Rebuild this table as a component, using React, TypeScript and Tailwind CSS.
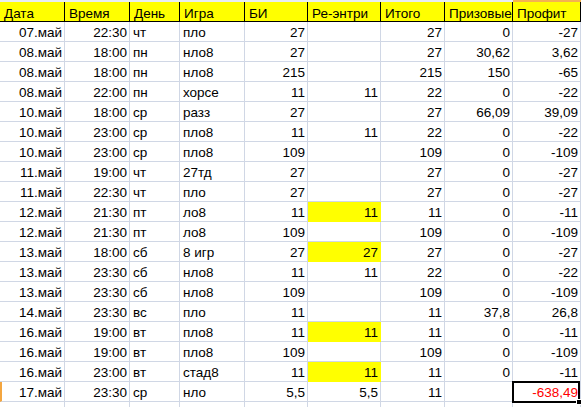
import React from "react";

const W = [
  "w-[65px]",
  "w-[65px]",
  "w-[50px]",
  "w-[65px]",
  "w-[63px]",
  "w-[73px]",
  "w-[64px]",
  "w-[68px]",
  "w-[68px]",
];

const headers = ["Дата", "Время", "День", "Игра", "БИ", "Ре-энтри", "Итого", "Призовые", "Профит"];

// align: r = right, l = left
const align = ["r", "r", "l", "l", "r", "r", "r", "r", "r"];

type Row = { v: string[]; y?: boolean };

const rows: Row[] = [
  { v: ["07.май", "22:30", "чт", "пло", "27", "", "27", "0", "-27"] },
  { v: ["08.май", "18:00", "пн", "нло8", "27", "", "27", "30,62", "3,62"] },
  { v: ["08.май", "18:00", "пн", "нло8", "215", "", "215", "150", "-65"] },
  { v: ["08.май", "22:00", "пн", "хорсе", "11", "11", "22", "0", "-22"] },
  { v: ["10.май", "18:00", "ср", "разз", "27", "", "27", "66,09", "39,09"] },
  { v: ["10.май", "23:00", "ср", "пло8", "11", "11", "22", "0", "-22"] },
  { v: ["10.май", "23:00", "ср", "пло8", "109", "", "109", "0", "-109"] },
  { v: ["11.май", "19:00", "чт", "27тд", "27", "", "27", "0", "-27"] },
  { v: ["11.май", "22:30", "чт", "пло", "27", "", "27", "0", "-27"] },
  { v: ["12.май", "21:30", "пт", "ло8", "11", "11", "11", "0", "-11"], y: true },
  { v: ["12.май", "21:30", "пт", "ло8", "109", "", "109", "0", "-109"] },
  { v: ["13.май", "18:00", "сб", "8 игр", "27", "27", "27", "0", "-27"], y: true },
  { v: ["13.май", "23:30", "сб", "нло8", "11", "11", "22", "0", "-22"] },
  { v: ["13.май", "23:30", "сб", "нло8", "109", "", "109", "0", "-109"] },
  { v: ["14.май", "23:30", "вс", "пло", "11", "", "11", "37,8", "26,8"] },
  { v: ["16.май", "19:00", "вт", "пло8", "11", "11", "11", "0", "-11"], y: true },
  { v: ["16.май", "19:00", "вт", "пло8", "109", "", "109", "0", "-109"] },
  { v: ["16.май", "23:00", "вт", "стад8", "11", "11", "11", "0", "-11"], y: true },
  { v: ["17.май", "23:30", "ср", "нло", "5,5", "5,5", "11", "", "-638,49"] },
];

export default function App() {
  return (
    <div
      className="relative w-[582px] h-[407px] overflow-hidden bg-white text-black text-[13.5px]"
      style={{ fontFamily: '"Liberation Sans", Arial, sans-serif' }}
    >
      {/* column header bottom strip */}
      <div className="flex h-[2px]">
        {W.map((w, i) => (
          <div key={i} className={`${w} h-[2px] ${i === 8 ? "bg-[#f4b350]" : "bg-[#e8edf4]"}`} />
        ))}
      </div>
      {/* header row */}
      <div className="flex h-[20px]">
        {headers.map((h, i) => (
          <div
            key={i}
            className={`${W[i]} h-[20px] flex items-end bg-[#ffff00] border-b border-r border-black pl-[4px] leading-[15px] whitespace-nowrap overflow-hidden`}
          >
            {h}
          </div>
        ))}
      </div>
      {/* data rows */}
      {rows.map((r, ri) => {
        const last = ri === rows.length - 1;
        return (
          <div key={ri} className="flex h-[20px]">
            {r.v.map((c, ci) => {
              const yellow = r.y && ci === 5;
              const red = last && ci === 8;
              return (
                <div
                  key={ci}
                  className={`${W[ci]} h-[20px] flex items-end pb-[1px] leading-[15px] whitespace-nowrap border-b border-r ${
                    yellow ? "bg-[#ffff00] border-[#ffff00]" : "border-[#d0d7e5]"
                  } ${align[ci] === "r" ? "justify-end pr-[2px]" : "justify-start pl-[3px]"} ${
                    red ? "text-[#ff0000]" : ""
                  } ${last && ci === 0 ? "border-l-2 border-l-[#f4a640]" : ""}`}
                >
                  {c}
                </div>
              );
            })}
          </div>
        );
      })}
      {/* partial row */}
      <div className="flex h-[5px]">
        {W.map((w, i) => (
          <div key={i} className={`${w} h-[5px] border-r border-[#d0d7e5]`} />
        ))}
      </div>
      {/* selection box */}
      <div className="absolute left-[512px] top-[381px] w-[68px] h-[22px] border-2 border-black pointer-events-none" />
      <div className="absolute left-[576px] top-[399px] w-[6px] h-[6px] bg-black border border-white" />
    </div>
  );
}
